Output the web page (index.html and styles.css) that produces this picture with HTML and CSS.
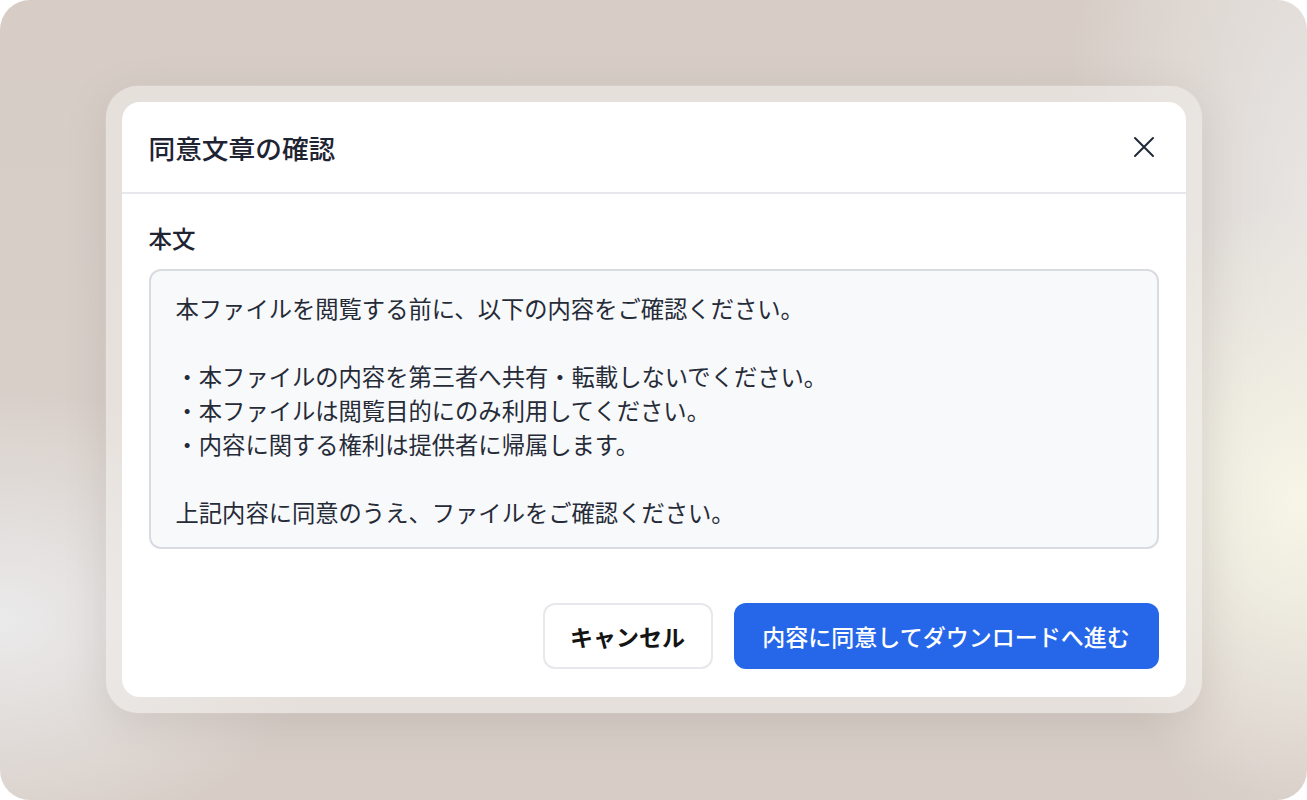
FILE: index.html
```html
<!DOCTYPE html>
<html lang="ja">
<head>
<meta charset="utf-8">
<link rel="stylesheet" href="styles.css">
</head>
<body>
<div class="stage">
  <div class="glass">
    <div class="dialog">
      <div class="header">
        <h1 class="title">同意文章の確認</h1>
        <button class="close" aria-label="閉じる">
          <svg width="24" height="24" viewBox="0 0 24 24" fill="none" stroke="#1f2937" stroke-width="2" stroke-linecap="round"><path d="M3 3 L21 21 M21 3 L3 21"/></svg>
        </button>
      </div>
      <div class="body">
        <div class="label">本文</div>
        <div class="textbox">
          <p>本ファイルを閲覧する前に、以下の内容をご確認ください。</p>
          <p class="blank">&nbsp;</p>
          <p>・本ファイルの内容を第三者へ共有・転載しないでください。</p>
          <p>・本ファイルは閲覧目的にのみ利用してください。</p>
          <p>・内容に関する権利は提供者に帰属します。</p>
          <p class="blank">&nbsp;</p>
          <p>上記内容に同意のうえ、ファイルをご確認ください。</p>
        </div>
      </div>
      <div class="footer">
        <button class="btn btn-cancel">キャンセル</button>
        <button class="btn btn-primary">内容に同意してダウンロードへ進む</button>
      </div>
    </div>
  </div>
</div>
</body>
</html>
```

FILE: styles.css
```css
* { box-sizing: border-box; }
html, body { margin: 0; padding: 0; background: #ffffff; }
body {
  font-family: "Noto Sans CJK JP", "Noto Sans", sans-serif;
  width: 1307px;
  height: 800px;
  overflow: hidden;
}
.stage {
  width: 1307px;
  height: 800px;
  border-radius: 30px;
  overflow: hidden;
  background:
    radial-gradient(ellipse 240px 300px at 1300px 500px, rgba(248,247,232,0.95), rgba(248,247,232,0) 100%),
    radial-gradient(ellipse 320px 230px at 0px 620px, rgba(236,236,237,0.95), rgba(236,236,237,0) 100%),
    radial-gradient(ellipse 240px 700px at 1307px 200px, rgba(233,231,229,0.9), rgba(233,231,229,0) 100%),
    linear-gradient(180deg, #d7cdc6 0%, #d8cfc9 60%, #d7cdc6 100%);
  display: flex;
  align-items: flex-start;
  justify-content: center;
  padding-top: 86px;
}
.glass {
  width: 1096px;
  height: 627px;
  border-radius: 32px;
  padding: 16px;
  background: rgba(240, 236, 233, 0.6);
  box-shadow: 0 10px 40px rgba(120, 110, 105, 0.18), 0 0 2px rgba(255,255,255,0.4);
}
.dialog {
  width: 1064px;
  height: 595px;
  background: #ffffff;
  border-radius: 18px;
  display: flex;
  flex-direction: column;
}
.header {
  height: 92px;
  border-bottom: 2px solid #e7e7ee;
  display: flex;
  align-items: center;
  justify-content: space-between;
  padding: 0 30px 0 27px;
}
.title {
  margin: 0;
  font-size: 26.7px;
  font-weight: 500;
  color: #1f2433;
}
.close {
  border: 0;
  background: transparent;
  padding: 0;
  width: 24px;
  height: 24px;
  display: flex;
  align-items: center;
  justify-content: center;
  cursor: pointer;
}
.body {
  padding: 28px 27px 0 27px;
}
.label {
  font-size: 23.5px;
  font-weight: 500;
  color: #1f2433;
  line-height: 32px;
  margin-bottom: 15px;
}
.textbox {
  height: 280px;
  border: 2px solid #d9dbe1;
  border-radius: 12px;
  background: #f8f9fb;
  padding: 20px 25px;
  font-size: 23.3px;
  line-height: 34px;
  color: #262b38;
}
.textbox p { margin: 0; }
.footer {
  margin-top: auto;
  padding: 0 27px 28px 27px;
  display: flex;
  justify-content: flex-end;
  gap: 21px;
}
.btn {
  font-family: "Noto Sans CJK JP", "Noto Sans", sans-serif;
  height: 66px;
  border-radius: 12px;
  font-size: 23px;
  cursor: pointer;
}
.btn-cancel {
  width: 170px;
  background: #ffffff;
  border: 2px solid #e7e8ec;
  color: #141414;
  font-weight: 700;
}
.btn-primary {
  width: 425px;
  background: #2667ea;
  border: 0;
  color: #ffffff;
  font-weight: 500;
}
```
